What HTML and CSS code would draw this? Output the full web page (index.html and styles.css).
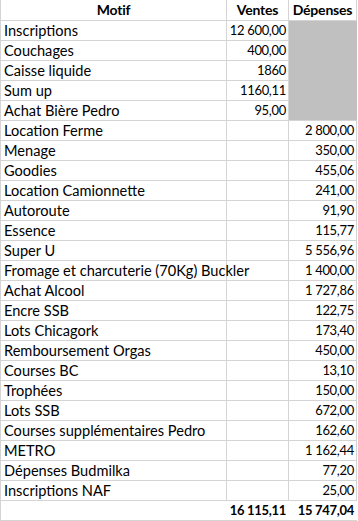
FILE: index.html
```html
<!DOCTYPE html>
<html lang="fr">
<head>
<meta charset="utf-8">
<link rel="stylesheet" href="styles.css">
</head>
<body>
<div class="sheet">
  <div class="row head"><div class="c motif">Motif</div><div class="c v">Ventes</div><div class="c d">Dépenses</div></div>
  <div class="row"><div class="c motif">Inscriptions</div><div class="c v">12 600,00</div><div class="c d gray"></div></div>
  <div class="row"><div class="c motif">Couchages</div><div class="c v">400,00</div><div class="c d gray"></div></div>
  <div class="row"><div class="c motif">Caisse liquide</div><div class="c v">1860</div><div class="c d gray"></div></div>
  <div class="row"><div class="c motif">Sum up</div><div class="c v">1160,11</div><div class="c d gray"></div></div>
  <div class="row"><div class="c motif">Achat Bière Pedro</div><div class="c v">95,00</div><div class="c d gray last"></div></div>
  <div class="row"><div class="c motif">Location Ferme</div><div class="c v"></div><div class="c d">2 800,00</div></div>
  <div class="row"><div class="c motif">Menage</div><div class="c v"></div><div class="c d">350,00</div></div>
  <div class="row"><div class="c motif">Goodies</div><div class="c v"></div><div class="c d">455,06</div></div>
  <div class="row"><div class="c motif">Location Camionnette</div><div class="c v"></div><div class="c d">241,00</div></div>
  <div class="row"><div class="c motif">Autoroute</div><div class="c v"></div><div class="c d">91,90</div></div>
  <div class="row"><div class="c motif">Essence</div><div class="c v"></div><div class="c d">115,77</div></div>
  <div class="row"><div class="c motif">Super U</div><div class="c v"></div><div class="c d">5 556,96</div></div>
  <div class="row"><div class="c motif">Fromage et charcuterie (70Kg) Buckler</div><div class="c v"></div><div class="c d">1 400,00</div></div>
  <div class="row"><div class="c motif">Achat Alcool</div><div class="c v"></div><div class="c d">1 727,86</div></div>
  <div class="row"><div class="c motif">Encre SSB</div><div class="c v"></div><div class="c d">122,75</div></div>
  <div class="row"><div class="c motif">Lots Chicagork</div><div class="c v"></div><div class="c d">173,40</div></div>
  <div class="row"><div class="c motif">Remboursement Orgas</div><div class="c v"></div><div class="c d">450,00</div></div>
  <div class="row"><div class="c motif">Courses BC</div><div class="c v"></div><div class="c d">13,10</div></div>
  <div class="row"><div class="c motif">Trophées</div><div class="c v"></div><div class="c d">150,00</div></div>
  <div class="row"><div class="c motif">Lots SSB</div><div class="c v"></div><div class="c d">672,00</div></div>
  <div class="row"><div class="c motif">Courses supplémentaires Pedro</div><div class="c v"></div><div class="c d">162,60</div></div>
  <div class="row"><div class="c motif">METRO</div><div class="c v"></div><div class="c d">1 162,44</div></div>
  <div class="row"><div class="c motif">Dépenses Budmilka</div><div class="c v"></div><div class="c d">77,20</div></div>
  <div class="row"><div class="c motif">Inscriptions NAF</div><div class="c v"></div><div class="c d">25,00</div></div>
  <div class="row total"><div class="c motif"></div><div class="c v">16 115,11</div><div class="c d">15 747,04</div></div>
</div>
</body>
</html>
```
FILE: styles.css
```css
html, body {
  margin: 0;
  padding: 0;
  background: #ffffff;
}
.sheet {
  width: 357px;
  border-left: 1px solid #d4d4d4;
  box-sizing: border-box;
  font-family: "Lato", "Open Sans", sans-serif;
  font-size: 14.6px;
  color: #000000;
}
.row {
  display: grid;
  grid-template-columns: 226px 62px 68px;
  height: 20px;
  border-bottom: 1px solid #d4d4d4;
  box-sizing: border-box;
}
.row.head {
  height: 21px;
}
.c {
  border-right: 1px solid #d4d4d4;
  white-space: nowrap;
  line-height: 19px;
  padding: 0 2px 0 3px;
  box-sizing: border-box;
}
.motif {
  text-align: left;
}
.v, .d {
  text-align: right;
  padding-left: 0;
  font-size: 13px;
  letter-spacing: -0.3px;
}
.head .c {
  font-weight: 700;
  line-height: 20px;
  text-align: center;
  font-size: 14px;
  letter-spacing: -0.2px;
  padding: 0;
}
.gray {
  background: #c0c0c0;
  border-right-color: #c0c0c0;
  box-shadow: 0 1px 0 #c0c0c0;
}
.gray.last {
  box-shadow: none;
}
.total .c {
  border-right-color: transparent;
  font-weight: 700;
}
```
